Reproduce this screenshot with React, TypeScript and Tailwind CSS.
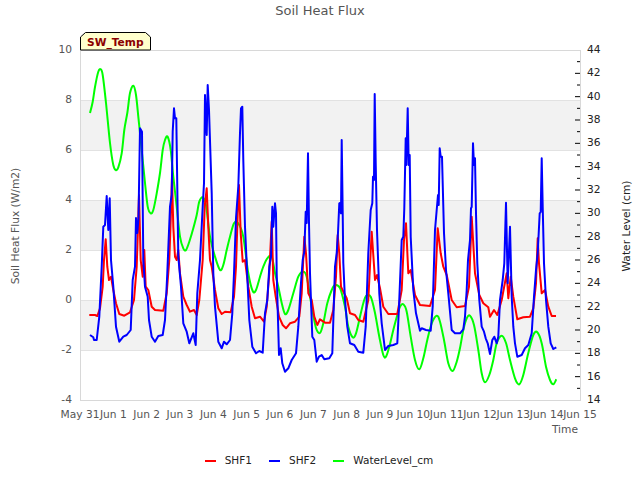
const green = "90,113 92.7,101.7 95,87 98.3,71.7 100.7,69.3 102.7,75 106,103 110,143 113.3,165 115.7,170 118.3,167.3 121.7,153.3 124.3,130 127.3,113 130,93 133.3,85.7 136,95 138.3,116.7 141.7,150 145,183 147.7,206.7 150.7,213.3 153.3,210 156.7,193.3 160,173 162.7,150 165,140 167.7,136.7 170.7,150 173.3,176.7 176.7,206.7 180,236.7 183.3,248.3 186,250 189.3,241.7 193.3,228.3 196.7,215 199.3,201.7 202.7,197.3 206,205 210,236.7 215,256.7 220,270 223.3,265 226.7,250 230,236.7 234,223.3 238,223 243.3,236.7 248.3,273.3 252.7,291 256,290 260,276.7 263.3,266.7 267.3,258.3 271.7,256.7 275,273 278.3,286.7 281.7,303 285,314 288.3,310 293.3,293.3 298.3,276.7 302.7,271.7 306.7,276.7 311.7,306.7 316,328 320,333 323.3,323.3 327.3,303.3 331.7,290 335,285 340,288 345,306.7 348.3,326.7 352.7,337.3 356,333.3 360,316.7 363.3,303.3 366,296 370.7,296.7 375,313 379.3,336.7 383.3,355 386,356.7 389.3,346.7 393.3,330 397.3,315 400,306.7 403.3,304.3 406.7,311.7 410.7,336.7 415,360 419.3,369.3 423.3,358.3 427.3,340 431.7,323.3 436.7,315.7 440,321.7 444,340 448.3,363.3 452.7,371 456.7,361.7 460,348 463.3,330 466.7,318.3 470,315.7 474,325 478.3,350 481.7,373.3 485,382.3 489.3,375 493.3,360 496.7,343.3 501.7,335.7 506,343 510,360 515,378.3 519.3,384.3 523.3,375 528.3,353 533.3,335 537.3,332.3 541.7,343.3 546,366.7 550,380 553.3,384.3 556.3,379.3";

const red = "89.3,315 95,315 97.3,316 100,308.3 102.7,286.7 104,260 105.7,239.3 107.3,266.7 109,280 111,276.7 113.3,290 116,303.3 119.3,314 124.3,315.7 130,312.3 134,300 136.7,266.7 138,226.7 139,195 140.7,260 142.7,276.7 144.3,250 145.7,286.7 148.3,290 151.7,306.7 155,310 163.3,310.7 166.7,293.3 169.3,260 170.7,220 172,176.7 173.3,226.7 175,256.7 176.7,260 178.3,250 180,273.3 183.3,296.7 186.7,305 190,311.7 194,310 196.7,315 199.3,300 202.7,260 204.7,206.7 206.7,188.3 208.3,226.7 210,260 211.7,266.7 215,290 218.3,308.3 221.7,314 225,311.7 230.7,312.3 234,296.7 236,266.7 237.7,213.3 239,185 240.7,233.3 242.7,261.7 245,260 248.3,286.7 251.7,306.7 255,318.3 260,316.7 264,321.7 266.7,306.7 269.3,273.3 271.7,221.7 273.3,280 275.7,296.7 279,316.7 282.7,325 286,328.3 290,323.3 295,321.7 299.3,316.7 301.7,293.3 304.3,236.7 306,253.3 308.3,293.3 311.7,300 314.3,316.7 317.3,325 320,319.3 325,322.7 330,322.7 333.3,310 336,276.7 337.7,235 339.3,253.3 341,286.7 343.3,291.7 346.7,298.3 350,313.3 355,315 358.3,320 363.3,321.7 368.3,300 371.7,231.7 375,280 377,275 380,288.3 383.3,306.7 388.3,314 397.3,314 401.7,290 404,240 406,223.3 408.3,273.3 410.7,270 415,295 420,305 430,306 435,290 437.7,228.3 440.7,253.3 443.3,266.7 446.7,275 451.7,300 456.7,307.3 465,306 469,286.7 471.7,216.7 475,273.3 479.3,295 483.3,303.3 488.3,307.3 490,316.7 494,310 497.3,315 501.7,300 506.7,273.3 508.3,298.3 510.7,276.7 513.3,296.7 517.3,319.3 523.3,317.3 530,316.7 533.3,308.3 536,283.3 537.7,238.3 539,263.3 541.7,293.3 545,290 548.3,306.7 551.7,316 556,316";

const blue = "90,335 93.3,337.3 94,340 96.7,340 99.3,316.7 101.7,266.7 103.3,226.7 105,225 106.7,196 108.3,230 109.7,198.3 111,260 113.3,286.7 116,326.7 119.3,341.7 123.3,336.7 126.7,335 130.7,330 132.7,280 135,266.7 136,218 137.3,233 138.5,218 140,128.3 142,131.7 143.3,260 145,286.7 147.7,296.7 149,320 151.7,336.7 155,341.7 158.3,336 162.7,335 165,320 167.3,273 170,206.7 171.7,195 172.7,131.7 174,108.3 175,118.3 176.3,118.3 178.3,256.7 181,286.7 183.3,323.3 186.7,331.7 189.3,343.3 193.3,333.3 195.7,345 197.3,293.3 200,260 202.7,206.7 204,183.3 205,95 206.7,135 207.7,85 209,110 211.7,193 213.3,273 215,306.7 218.3,341.7 221.7,348.3 224,341.7 226.7,344.3 230,340 232.3,313.3 234,273.3 236,218.3 238.3,186.7 240,133 241,108.3 242.3,106.7 243.3,160 245,226.7 247.3,276.7 249.3,320 252.3,346.7 256,353.3 259.3,351 262.7,352.7 265,313.3 267.3,300 269.3,266.7 271,256.7 272.3,206.7 273.3,226.7 275,203.3 276,213.3 276.7,273.3 278,320 279,355 280.7,348.3 282.3,363.3 285,371.7 288.3,368.3 291.7,360 296,353.3 298.3,326.7 300.7,286.7 302.7,260 304.3,251.7 305.7,211.7 306.7,223 308,153.3 309,223.3 310,273.3 312.3,336.7 314.3,340 316.7,361.7 319,356.7 321.7,355 324.3,359.3 329.3,358.3 332.3,353.3 335,266.7 336.7,253 338,233 339.3,203.3 340,203 341,213.3 341.7,140 342.7,213 343.3,263 345,300 347.3,326.7 350,343.3 354.3,345 358.3,351.7 363.3,352.7 365.7,326.7 368.3,253 370.7,210 372.3,203.3 373,176.7 374,180 374.7,94 375.7,163 377,230 379.3,293.3 381.7,323.3 385,350 388.3,346 393.3,345 397.3,343.3 399,306.7 401.7,240 403.3,236.7 404.3,208.3 405.7,138.3 406.3,165 407.7,108.3 408.7,165 409.7,155 410.7,236.7 413.3,290 416,313.3 420,330.7 421.7,328.3 426,330 430.7,330.7 432.7,306.7 435,230 436.7,210 438,195 438.7,205 439.7,148.3 440.7,156.7 442,156.7 444,233 446,270 448.3,293.3 451.7,330 455,333.3 460,333.3 463.3,329.3 465,316.7 466.7,290 468,260 470,240 471,208.3 471.7,207 473,143.3 474,165 475,158.3 476,213.3 477.3,263.3 479.3,300 481.7,326.7 484,331.7 485.7,338.3 487.7,343.3 490,354 492.3,340 494.3,336.7 496.7,343.3 498.3,336.7 500,300 502.7,280 504.3,263.3 506,202.7 507.7,283.3 510,226.7 511.7,296.7 513.3,326.7 515,343.3 517.3,356.7 521.7,355 525,348.3 528.3,345 531.7,333.3 534,296.7 536,270 537.7,253.3 539.7,213.3 540.7,212 541.7,158.3 542.7,206.7 544,263.3 546,300 548.3,326.7 550.7,343.3 553.3,349 556.3,347.3";

function smooth(points: string) {
  const p = points.split(" ").map((s) => s.split(",").map(Number));
  let d = `M${p[0][0]} ${p[0][1]}`;
  for (let i = 0; i < p.length - 1; i++) {
    const a = p[Math.max(i - 1, 0)];
    const b = p[i];
    const c = p[i + 1];
    const e = p[Math.min(i + 2, p.length - 1)];
    d += ` C${(b[0] + (c[0] - a[0]) / 6).toFixed(1)} ${(b[1] + (c[1] - a[1]) / 6).toFixed(1)} ${(c[0] - (e[0] - b[0]) / 6).toFixed(1)} ${(c[1] - (e[1] - b[1]) / 6).toFixed(1)} ${c[0]} ${c[1]}`;
  }
  return d;
}

const leftTicks = [10, 8, 6, 4, 2, 0, -2, -4];
const rightTicks = [44, 42, 40, 38, 36, 34, 32, 30, 28, 26, 24, 22, 20, 18, 16, 14];
const dates = ["May 31", "Jun 1", "Jun 2", "Jun 3", "Jun 4", "Jun 5", "Jun 6", "Jun 7", "Jun 8", "Jun 9", "Jun 10", "Jun 11", "Jun 12", "Jun 13", "Jun 14", "Jun 15"];
const minor = Array.from({ length: 15 }, (_, i) => 15 + i * 2);
const major = Array.from({ length: 14 }, (_, i) => 16 + i * 2);
const yR = (v: number) => 400 - ((v - 14) * 350) / 30;

const legend = [
  { name: "SHF1", line: "bg-[#ff0000]" },
  { name: "SHF2", line: "bg-[#0000ff]" },
  { name: "WaterLevel_cm", line: "bg-[#00ff00]" },
];

export default function App() {
  return (
    <div className="w-[640px] h-[480px] bg-white flex flex-col font-['DejaVu_Sans',sans-serif] overflow-hidden">
      <div className="h-[22px] flex items-center justify-center text-[13px] text-[#555555]">Soil Heat Flux</div>
      <svg width={640} height={430} viewBox="0 22 640 430" className="block shrink-0" fontSize={10.67}>
        <rect x={80} y={100} width={500} height={50} fill="#f2f2f2" />
        <rect x={80} y={200} width={500} height={50} fill="#f2f2f2" />
        <rect x={80} y={300} width={500} height={50} fill="#f2f2f2" />
        {[100, 150, 200, 250, 300, 350].map((y) => (
          <line key={y} x1={80} x2={580} y1={y + 0.5} y2={y + 0.5} stroke="#e2e2e2" />
        ))}
        <rect x={80.5} y={50.5} width={500} height={350} fill="none" stroke="#d8d8d8" />
        <path d={smooth(green)} fill="none" stroke="#00ff00" strokeWidth={2} strokeLinejoin="round" />
        <polyline points={red} fill="none" stroke="#ff0000" strokeWidth={2} strokeLinejoin="round" />
        <polyline points={blue} fill="none" stroke="#0000ff" strokeWidth={2} strokeLinejoin="round" />
        {minor.map((v) => (
          <line key={v} x1={577} x2={580} y1={yR(v)} y2={yR(v)} stroke="#000" />
        ))}
        {major.map((v) => (
          <line key={v} x1={575} x2={580} y1={yR(v)} y2={yR(v)} stroke="#000" />
        ))}
        {leftTicks.map((v, i) => (
          <text key={v} x={72} y={53 + i * 50} textAnchor="end" fill="#555555">{v}</text>
        ))}
        {rightTicks.map((v, i) => (
          <text key={v} x={587} y={53 + (i * 350) / 15} fill="#222222">{v}</text>
        ))}
        {dates.map((d, i) => (
          <text key={d} x={80 + (i * 100) / 3} y={418} textAnchor="middle" fill="#555555">{d}</text>
        ))}
        <text x={578} y={433} textAnchor="end" fill="#555555">Time</text>
        <text x={0} y={0} transform="translate(18.5 226) rotate(-90)" textAnchor="middle" fill="#555555">Soil Heat Flux (W/m2)</text>
        <text x={0} y={0} transform="translate(630 226) rotate(-90)" textAnchor="middle" fill="#222222">Water Level (cm)</text>
        <polygon points="80.5,50 80.5,37 85.5,32.5 145.5,32.5 150.5,37 150.5,50" fill="#ffffcc" stroke="#000" />
        <text x={87} y={46} fontWeight={700} fill="#8b0000">SW_Temp</text>
      </svg>
      <div className="h-[20px] flex items-center justify-center gap-[17px] text-[10.5px] text-[#222222] pr-[2px] -mt-[1px]">
        {legend.map((l) => (
          <div key={l.name} className="flex items-center gap-[9px]">
            <span className={`w-[11px] h-[2px] ${l.line}`} />
            <span>{l.name}</span>
          </div>
        ))}
      </div>
    </div>
  );
}
